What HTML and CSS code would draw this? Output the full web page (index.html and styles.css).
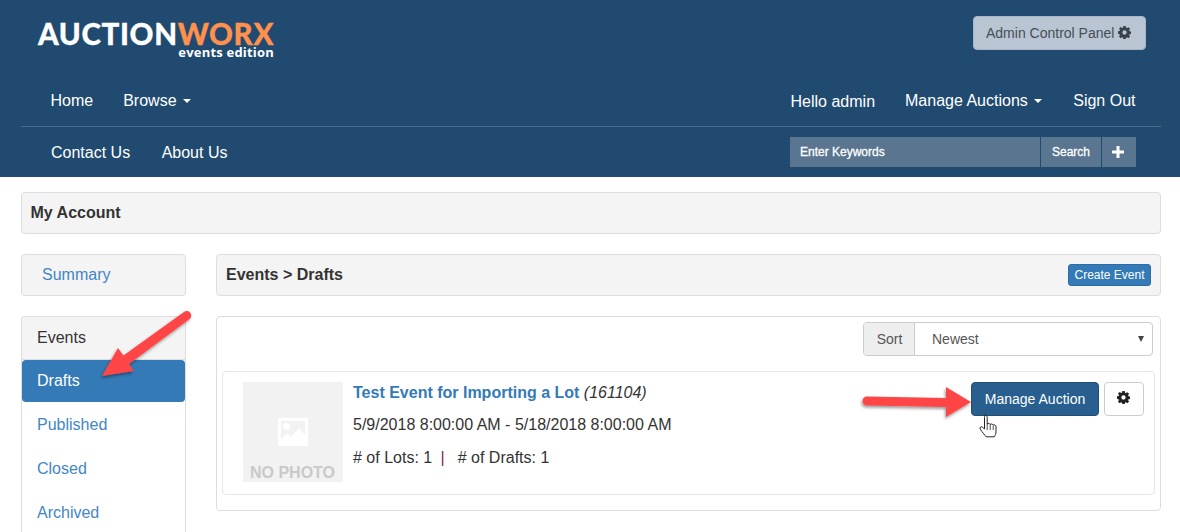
FILE: index.html
```html
<!DOCTYPE html>
<html lang="en">
<head>
<meta charset="utf-8">
<title>My Account</title>
<link rel="stylesheet" href="styles.css">
</head>
<body>
<svg class="defs" width="0" height="0" aria-hidden="true"><defs>
<symbol id="gear" viewBox="0 0 24 24"><path fill-rule="evenodd" d="M9.800 0h4.400l.6 3.200 1.700.7 2.700-1.800 3.100 3.100-1.800 2.700.7 1.700 3.200.6v4.400l-3.200.6-.7 1.700 1.800 2.700-3.100 3.100-2.700-1.800-1.700.7-.6 3.200H9.800l-.6-3.200-1.700-.7-2.700 1.800-3.100-3.100 1.800-2.700-.7-1.700L-.2 14.200V9.800l3.200-.6.7-1.700-1.800-2.700L5 1.700l2.700 1.800 1.700-.7zM12 8a4 4 0 1 0 0 8 4 4 0 0 0 0-8z"/></symbol>
</defs></svg>
<header class="site-header">
  <div class="brand-row">
    <div class="logo">
      <div class="logo-main">AUCTION<span class="logo-accent">WORX</span></div>
      <div class="logo-sub">events edition</div>
    </div>
    <a class="admin-btn">Admin Control Panel <svg class="gear-sm"><use href="#gear"/></svg></a>
  </div>
  <nav class="nav-row nav-top">
    <div class="nav-group">
      <a class="nav-link">Home</a>
      <a class="nav-link">Browse <i class="caret"></i></a>
    </div>
    <div class="nav-group">
      <span class="nav-link nav-hello">Hello admin</span>
      <a class="nav-link">Manage Auctions <i class="caret"></i></a>
      <a class="nav-link nav-signout">Sign Out</a>
    </div>
  </nav>
  <nav class="nav-row nav-bottom">
    <div class="nav-group nav-lower">
      <a class="nav-link">Contact Us</a>
      <a class="nav-link nav-about">About Us</a>
    </div>
    <form class="search">
      <div class="search-input">Enter Keywords</div>
      <div class="search-btn">Search</div>
      <div class="search-plus"><svg width="12" height="12" viewBox="0 0 12 12"><path d="M4.500 0h3v4.500H12v3H7.500V12h-3V7.500H0v-3h4.500z" fill="#fff"/></svg></div>
    </form>
  </nav>
</header>
<main class="page">
  <div class="bar bar-title">My Account</div>
  <div class="columns">
    <aside class="sidebar">
      <a class="summary">Summary</a>
      <div class="side-list">
        <div class="side-head">Events</div>
        <a class="side-item active">Drafts</a>
        <a class="side-item">Published</a>
        <a class="side-item">Closed</a>
        <a class="side-item">Archived</a>
      </div>
    </aside>
    <section class="content">
      <div class="bar bar-sub">
        <span>Events &gt; Drafts</span>
        <a class="create-btn">Create Event</a>
      </div>
      <div class="results">
        <div class="sort-row">
          <div class="sort">
            <span class="sort-label">Sort</span>
            <span class="sort-select">Newest<i class="sort-arrow"></i></span>
          </div>
        </div>
        <article class="event">
          <div class="photo">
            <svg class="photo-icon" width="30" height="28" viewBox="0 0 30 28"><path fill="#fff" fill-rule="evenodd" d="M0 0h30v28H0zM3 3v18l6-6 4 4 8-9 6 7V3zM8.500 5a3.500 3.500 0 1 0 0 7 3.500 3.500 0 0 0 0-7z"/></svg>
            <span class="photo-text">NO PHOTO</span>
          </div>
          <div class="event-info">
            <div class="event-title"><a>Test Event for Importing a Lot</a> <em>(161104)</em></div>
            <div class="event-dates">5/9/2018 8:00:00 AM - 5/18/2018 8:00:00 AM</div>
            <div class="event-counts"># of Lots: 1 <span class="pipe">|</span> # of Drafts: 1</div>
          </div>
          <div class="event-actions">
            <a class="manage-btn">Manage Auction</a>
            <a class="gear-btn"><svg class="gear-md"><use href="#gear"/></svg></a>
          </div>
        </article>
      </div>
    </section>
  </div>
</main>
<svg class="overlay" width="1180" height="532" viewBox="0 0 1180 532" aria-hidden="true">
  <defs><filter id="sh" x="-20%" y="-20%" width="140%" height="140%"><feDropShadow dx="-1" dy="2" stdDeviation="1.500" flood-color="#000" flood-opacity=".4"/></filter></defs>
  <g filter="url(#sh)" fill="#ff4444">
    <path d="M102 376L118 348l5.500 7.500L184 312a4 4 0 0 1 5.500 7L129 364l5 7z"/>
    <path d="M867 396.500L946 398V387l25 15-25 15V407l-79-1.500a4.500 4.500 0 0 1 0-9z"/>
  </g>
  <path d="M985 415c1.500 0 2.200 1 2.200 2.500v6.500c1-.9 2.400-.7 3 .4 1-.8 2.400-.5 3 .6 1.200-.6 2.800.1 2.800 1.800v5c0 2-.8 3.500-1.800 5h-8c-1.500-2-4-4.500-6-7.700-.8-1.500.8-3 2.300-2l2 2V417.500c0-1.500.6-2.500 1.500-2.500z" fill="#fff" stroke="#222" stroke-width="1"/>
  <path d="M987.200 424v6M990.200 424.500v5.500M993.200 425.500v4.500" stroke="#222" stroke-width=".8" fill="none"/>
</svg>
</body>
</html>
```
FILE: styles.css
```css
* { box-sizing: border-box; }
html, body { margin: 0; height: 532px; overflow: hidden; }
body { font-family: "Liberation Sans", Arial, sans-serif; font-size: 16px; color: #333; background: #fff; position: relative; }
.defs { position: absolute; }
a { text-decoration: none; }

.site-header { height: 177px; background: #204a70; padding: 0 19px 0 21px; color: #fff; }
.brand-row { height: 77px; display: flex; justify-content: space-between; align-items: flex-start; padding: 16px 15px 0 17px; }
.logo { margin-top: 6px; width: 236px; }
.logo-main { font-family: Lato, sans-serif; font-weight: 900; font-size: 29.500px; line-height: 24px; letter-spacing: .65px; white-space: nowrap; color: #fff; -webkit-text-stroke: .3px currentColor; }
.logo-accent { color: #ff914d; }
.logo-sub { font-family: "Open Sans", sans-serif; font-weight: 700; font-size: 13px; line-height: 14px; text-align: right; letter-spacing: .2px; white-space: nowrap; margin-top: -1px; }
.admin-btn { display: flex; align-items: center; gap: 5px; height: 34px; width: 173px; padding-left: 12px; background: #b9c5d2; border: 1px solid #a8b5c4; border-radius: 4px; color: #444f58; font-size: 14px; }
.gear-sm { width: 13px; height: 13px; fill: #39424a; margin-top: -1px; margin-left: -1px; }

.nav-row { display: flex; justify-content: space-between; align-items: center; }
.nav-top { height: 50px; border-bottom: 1px solid #4c6d8c; padding: 0 10.500px 2px 14.500px; }
.nav-bottom { height: 50px; padding: 0 25px 0 15px; }
.nav-group { display: flex; align-items: center; }
.nav-lower { padding-top: 2px; }
.nav-link { color: #fff; font-size: 16px; line-height: 20px; padding: 0 15px; white-space: nowrap; }
.nav-hello { position: relative; top: 1px; }
.nav-signout { padding-left: 16px; }
.nav-about { padding-left: 17px; margin-left: -.5px; }
.caret { display: inline-block; width: 0; height: 0; margin-left: 2px; vertical-align: middle; border-top: 4px solid #fff; border-left: 4px solid transparent; border-right: 4px solid transparent; }

.search { display: flex; height: 30px; color: #fff; font-size: 12px; }
.search-input { width: 250px; background: #59758f; padding-left: 10px; line-height: 30px; -webkit-text-stroke: .3px #fff; }
.search-btn { width: 60px; margin-left: 1px; background: #59758f; text-align: center; line-height: 30px; -webkit-text-stroke: .3px #fff; }
.search-plus { width: 34px; margin-left: 1px; padding-right: 2px; background: #59758f; display: flex; align-items: center; justify-content: center; }

.page { padding: 15px 19px 0 21px; }
.bar { background: #f4f4f4; border: 1px solid #ddd; border-radius: 4px; height: 42px; display: flex; align-items: center; padding: 0 9px; font-weight: 700; color: #333; }
.bar-title { padding-left: 8.500px; }
.columns { display: flex; gap: 30px; margin-top: 20px; }

.sidebar { width: 165px; flex: none; }
.summary { display: block; height: 42px; line-height: 40px; padding-left: 20px; background: #f4f4f4; border: 1px solid #ddd; border-radius: 4px; color: #4386c5; }
.side-list { margin-top: 20px; border: 1px solid #ddd; border-bottom: 0; border-radius: 4px 4px 0 0; height: 216px; overflow: hidden; }
.side-head { height: 43px; line-height: 41px; padding-left: 15px; background: #f4f4f4; color: #333; border-bottom: 1px solid #ddd; }
.side-item { display: block; height: 44px; line-height: 44px; padding-left: 15px; color: #4386c5; }
.side-item.active { height: 42px; line-height: 41px; margin-bottom: 1px; background: #337ab7; color: #fff; border-radius: 4px; }

.content { flex: 1; }
.bar-sub { justify-content: space-between; }
.create-btn { width: 83px; text-align: center; background: #337ab7; border: 1px solid #2e6da4; border-radius: 3px; color: #fff; font-size: 12px; font-weight: 400; height: 22px; line-height: 20px; }
.results { margin-top: 20px; height: 195px; border: 1px solid #ddd; border-radius: 4px; padding: 5px; }
.sort-row { display: flex; justify-content: flex-end; margin-right: 2px; }
.sort { display: flex; width: 290px; height: 34px; border: 1px solid #ccc; border-radius: 4px; font-size: 14px; color: #555; }
.sort-label { width: 51px; padding-left: 1px; background: #eee; border-right: 1px solid #ccc; text-align: center; line-height: 32px; border-radius: 3px 0 0 3px; }
.sort-select { flex: 1; position: relative; padding-left: 17px; line-height: 32px; }
.sort-arrow { position: absolute; right: 8px; top: 13px; border-top: 6px solid #444; border-left: 3px solid transparent; border-right: 3px solid transparent; }

.event { display: flex; margin-top: 15px; height: 124px; border: 1px solid #e6e6e6; border-radius: 4px; padding: 10px 10px 0 20px; }
.photo { width: 100px; height: 100px; background: #f2f2f2; display: flex; flex-direction: column; align-items: center; flex: none; }
.photo-icon { margin-top: 36px; }
.photo-text { margin: 19px 1px 0 0; font-weight: 700; font-size: 16px; line-height: 16px; color: #c9c9c9; white-space: nowrap; }
.event-info { flex: 1; padding-left: 10px; }
.event-title { font-size: 16px; line-height: 20px; white-space: nowrap; padding-top: 1px; }
.event-title a { color: #337ab7; font-weight: 700; }
.event-dates { margin-top: 12px; line-height: 20px; white-space: nowrap; }
.event-counts { margin-top: 13px; line-height: 20px; white-space: pre-wrap; }
.pipe { color: #8a2252; margin: 0 8.500px 0 4px; }
.event-actions { display: flex; gap: 5px; flex: none; }
.manage-btn { width: 128px; height: 34px; line-height: 32px; text-align: center; background: #285f8f; border: 1px solid #204d74; border-radius: 4px; color: #fff; font-size: 14px; }
.gear-btn { width: 40px; height: 34px; padding: 0 2px 3px 0; background: #fff; border: 1px solid #ccc; border-radius: 4px; display: flex; align-items: center; justify-content: center; }
.gear-md { width: 13px; height: 13px; fill: #222; }

.overlay { position: absolute; left: 0; top: 0; pointer-events: none; }
```
